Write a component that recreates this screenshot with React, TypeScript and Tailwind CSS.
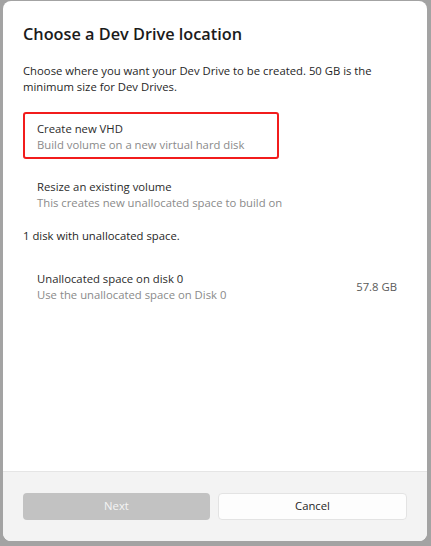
import React from "react";

export default function App() {
  return (
    <div
      className="w-[431px] h-[546px] bg-[#a3a3a3] pl-[3px] pr-[4px] pt-[1px] pb-[5px] flex"
      style={{ fontFamily: '"Open Sans", "Noto Sans", sans-serif' }}
    >
      <div className="flex-1 flex flex-col rounded-[8px] overflow-hidden bg-white">
        <div className="flex-1 flex flex-col px-[20px] pt-[22px]">
          <h1 className="text-[16.3px] leading-[22px] font-semibold text-[#1b1b1b]">
            Choose a Dev Drive location
          </h1>
          <p className="mt-[18px] text-[11.3px] leading-[16px] text-[#1f1f1f]">
            Choose where you want your Dev Drive to be created. 50 GB is the minimum size for Dev Drives.
          </p>
          <div className="mt-[17px] w-[256px] h-[47px] border-2 border-[#f21c1c] rounded-[3px] pl-[12px] pt-[7px] flex flex-col">
            <div className="text-[11.3px] leading-[16px] text-[#2b2b2b]">Create new VHD</div>
            <div className="text-[11.3px] leading-[16px] text-[#8a8a8a]">Build volume on a new virtual hard disk</div>
          </div>
          <div className="mt-[20px] pl-[14px] flex flex-col">
            <div className="text-[11.3px] leading-[16px] text-[#2b2b2b]">Resize an existing volume</div>
            <div className="text-[11.3px] leading-[16px] text-[#8a8a8a]">This creates new unallocated space to build on</div>
          </div>
          <div className="mt-[17px] text-[11.3px] leading-[16px] text-[#1f1f1f]">1 disk with unallocated space.</div>
          <div className="mt-[27px] pl-[14px] pr-[10px] flex items-center justify-between">
            <div className="flex flex-col">
              <div className="text-[11.3px] leading-[16px] text-[#2b2b2b]">Unallocated space on disk 0</div>
              <div className="text-[11.3px] leading-[16px] text-[#8a8a8a]">Use the unallocated space on Disk 0</div>
            </div>
            <div className="text-[11.3px] leading-[16px] text-[#5a5a5a]">57.8 GB</div>
          </div>
        </div>
        <div className="h-[70px] bg-[#f3f3f3] border-t border-[#e5e5e5] px-[20px] pt-[21px] flex gap-[8px]">
          <button className="flex-1 h-[27px] rounded-[4px] bg-[#c2c2c2] text-[11.3px] text-[#f5f5f5]">
            Next
          </button>
          <button className="flex-1 h-[27px] rounded-[4px] bg-[#fdfdfd] border border-[#e3e3e3] text-[11.3px] text-[#1f1f1f]">
            Cancel
          </button>
        </div>
      </div>
    </div>
  );
}
